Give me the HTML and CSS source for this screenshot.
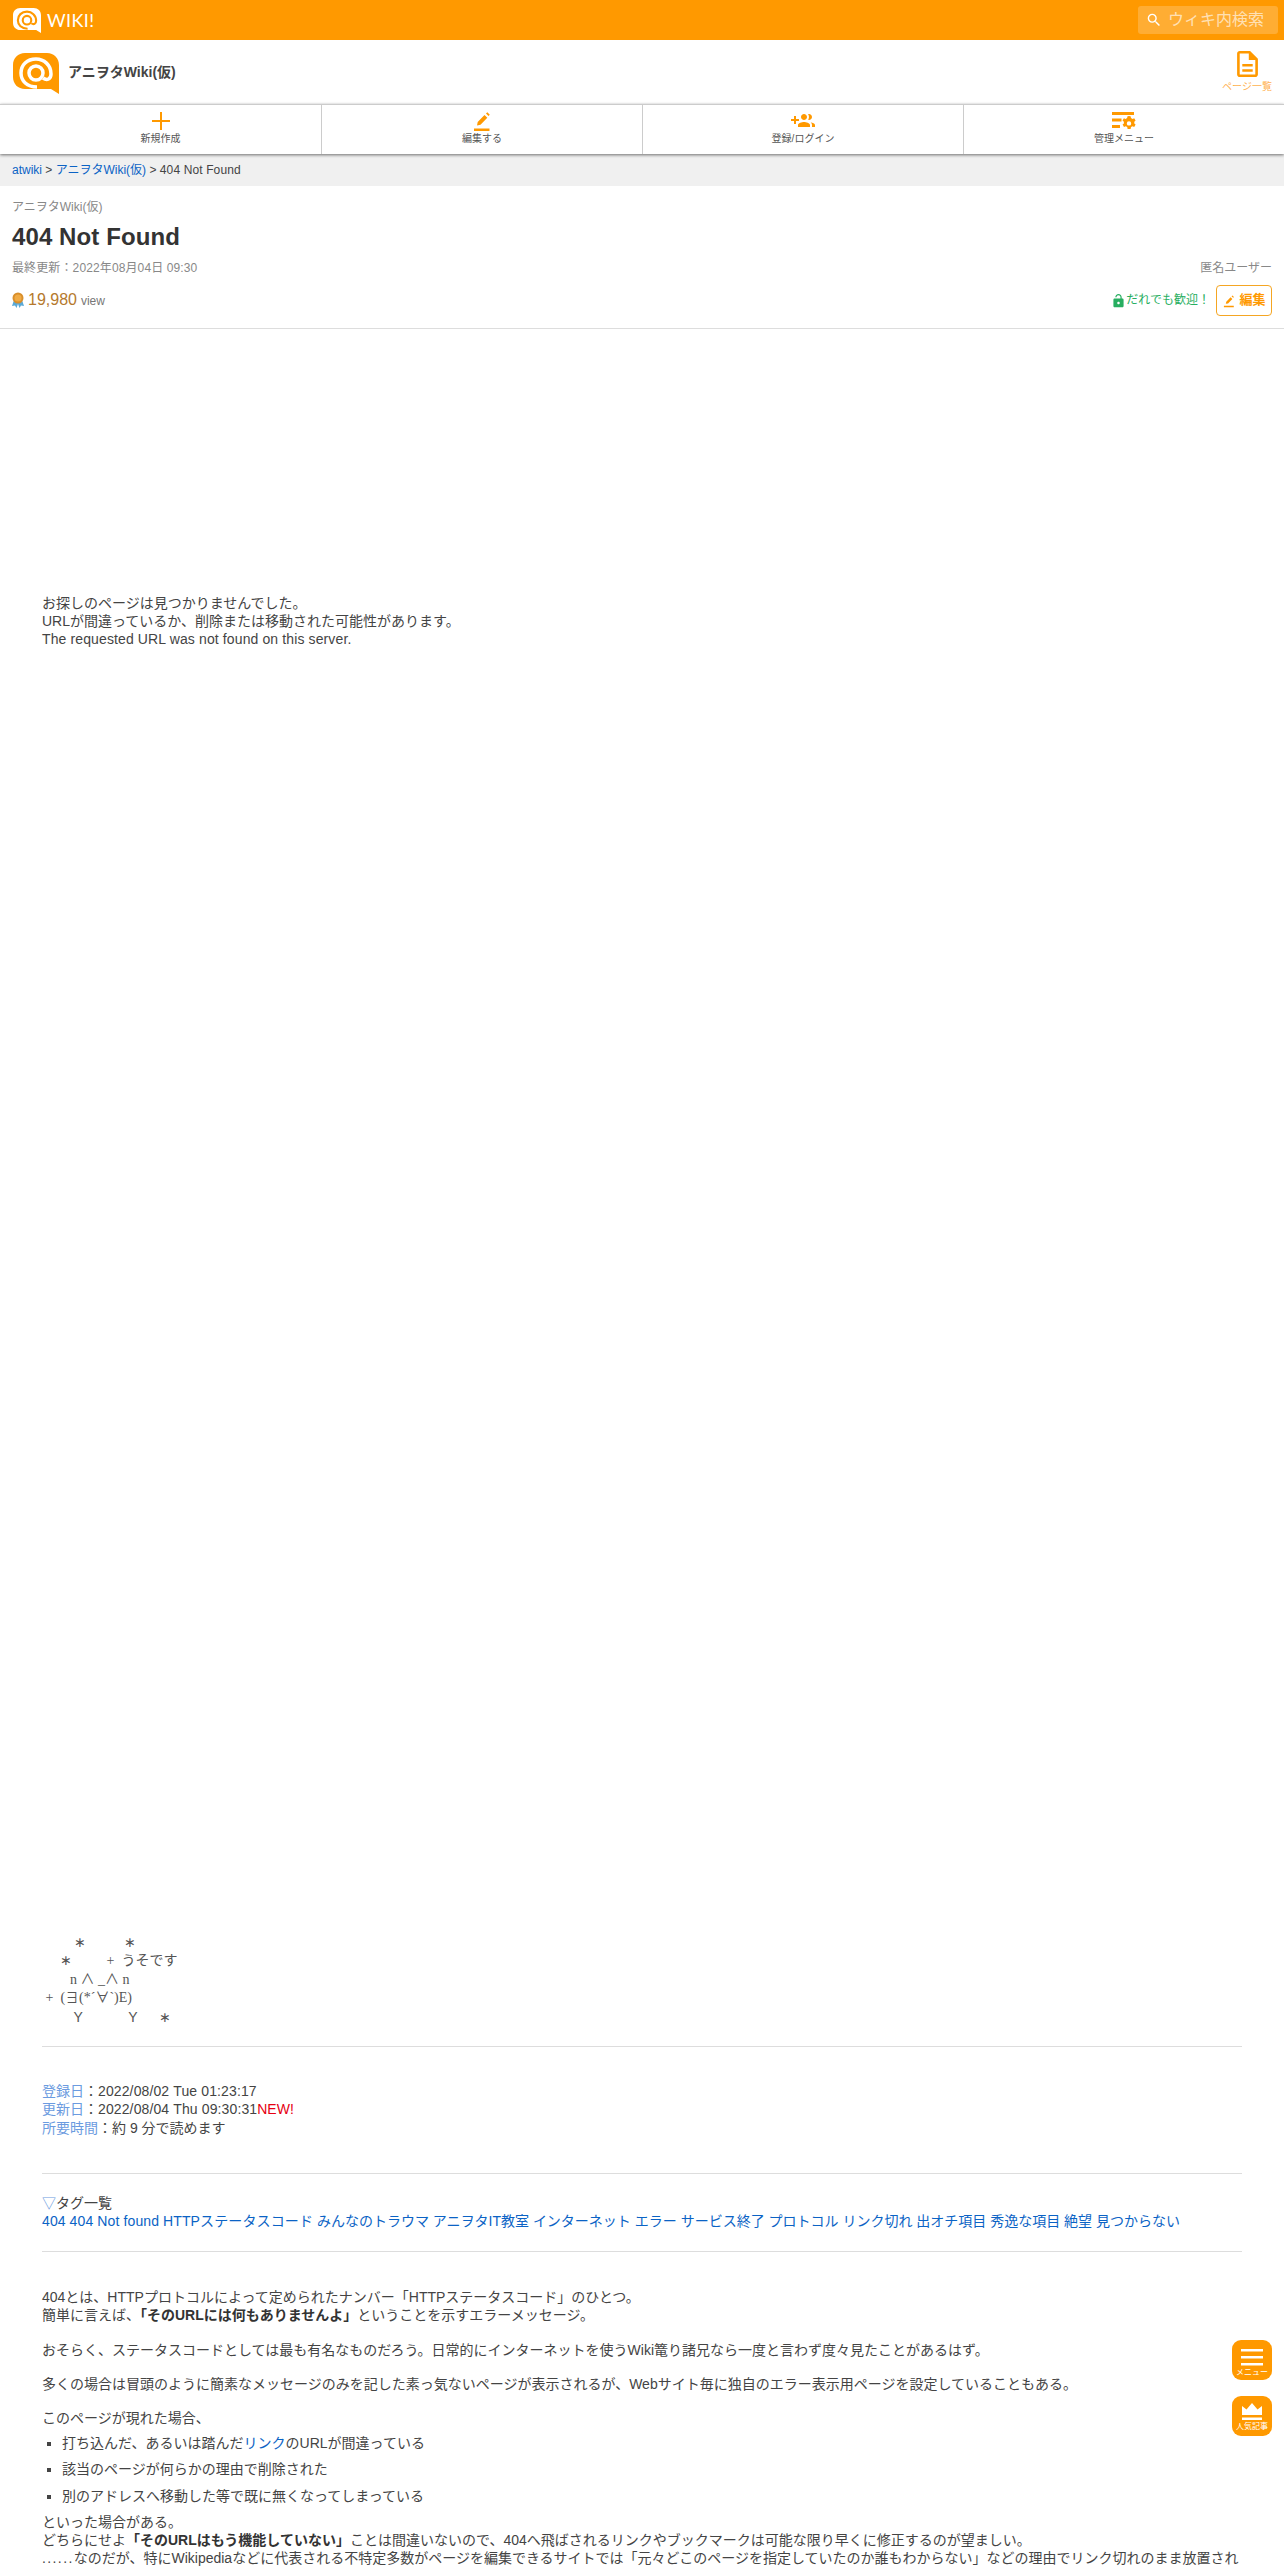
FILE: index.html
```html
<!DOCTYPE html>
<html lang="ja">
<head>
<meta charset="utf-8">
<title>404 Not Found - アニヲタWiki(仮)</title>
<link rel="stylesheet" href="styles.css">
</head>
<body>
<header class="topbar">
  <a class="brand">
    <svg class="brand-mark" viewBox="0 0 46 41"><path class="fill-white" d="M12 0H34C41 0 46 5 46 12V41L38 36H12C5 36 0 31 0 24V12C0 5 5 0 12 0Z"/><circle class="ring-orange" cx="23" cy="20" r="7"/><path class="ring-orange" d="M38 21C38 12 31 6 23 6C14 6 8 12 8 20C8 28 14 34 24 34M38 21C38 26 34 28 30 25"/></svg>
    <span class="brand-word">WIKI!</span>
  </a>
  <div class="search">
    <svg class="search-icon" viewBox="2 2 20 20"><path d="M15.500 14h-.79l-.28-.27A6.470 6.470 0 0 0 16 9.500 6.500 6.500 0 1 0 9.500 16c1.610 0 3.090-.59 4.230-1.570l.27.28v.79l5 4.990L20.490 19l-4.990-5zm-6 0C7.010 14 5 11.990 5 9.500S7.010 5 9.500 5 14 7.010 14 9.500 11.990 14 9.500 14z"/></svg>
    <span class="search-text">ウィキ内検索</span>
  </div>
</header>

<section class="siterow">
  <svg class="site-mark" viewBox="0 0 46 41"><path class="fill-orange" d="M12 0H34C41 0 46 5 46 12V41L38 36H12C5 36 0 31 0 24V12C0 5 5 0 12 0Z"/><circle class="ring-white" cx="23" cy="20" r="7"/><path class="ring-white" d="M38 21C38 12 31 6 23 6C14 6 8 12 8 20C8 28 14 34 24 34M38 21C38 26 34 28 30 25"/></svg>
  <span class="site-name">アニヲタWiki(仮)</span>
  <a class="pagelist">
    <svg class="pagelist-icon" viewBox="4 2 16 20"><path d="M8 16h8v2H8zm0-4h8v2H8zm6-10H6c-1.100 0-2 .9-2 2v16c0 1.100.89 2 1.990 2H18c1.100 0 2-.9 2-2V8l-6-6zm4 18H6V4h7v5h5v11z"/></svg>
    <span>ページ一覧</span>
  </a>
</section>

<nav class="nav">
  <a class="nav-item">
    <svg class="nav-icon" viewBox="0 0 22 22"><path d="M10 2h2v8h8v2h-8v8h-2v-8H2v-2h8z"/></svg>
    <span>新規作成</span>
  </a>
  <a class="nav-item">
    <svg class="nav-icon" viewBox="0 0 22 22"><path d="M13.500 5l2.800 2.800-6.800 7-3.500.7.700-3.500zM15 3.500l1.300-1.300 2.500 2.500-1.300 1.300zM3 18.500h15.500V21H3z"/></svg>
    <span>編集する</span>
  </a>
  <a class="nav-item">
    <svg class="nav-icon" viewBox="0 1 24 22"><path d="M8 10H5V7H3v3H0v2h3v3h2v-3h3v-2zm10 1c1.660 0 2.990-1.340 2.990-3S19.660 5 18 5c-.32 0-.63.05-.91.14.57.81.9 1.790.9 2.860s-.34 2.040-.9 2.860c.28.09.59.14.91.14zm-5 0c1.660 0 2.990-1.340 2.990-3S14.660 5 13 5s-3 1.340-3 3 1.340 3 3 3zm6.620 2.160c.83.73 1.380 1.660 1.380 2.840v2h3v-2c0-1.540-2.370-2.490-4.380-2.840zM13 13c-2 0-6 1-6 3v2h12v-2c0-2-4-3-6-3z"/></svg>
    <span>登録/ログイン</span>
  </a>
  <a class="nav-item">
    <svg class="nav-icon" viewBox="0 0 24 22"><path d="M0 2h22v3H0zM0 8.500h9.500v3H0zM0 15h8v3H0z"/><path transform="translate(1 -1)" d="M16 7l1.600.3.400 1.800 1.500.8 1.700-.6 1.400 2.300-1.300 1.200v1.600l1.300 1.200-1.400 2.300-1.700-.6-1.500.8-.4 1.800h-3l-.4-1.800-1.500-.8-1.700.6-1.400-2.300 1.300-1.200v-1.600L9.500 11.600l1.400-2.300 1.700.6 1.500-.8.4-1.800zm0 5.200a2.200 2.200 0 1 0 0 4.400 2.200 2.200 0 0 0 0-4.400z"/></svg>
    <span>管理メニュー</span>
  </a>
</nav>

<div class="crumbs"><a class="link">atwiki</a> &gt; <a class="link">アニヲタWiki(仮)</a> &gt; <span class="lat">404 Not Found</span></div>

<section class="pagehead">
  <div class="wikiname">アニヲタWiki(仮)</div>
  <h1 class="title">404 Not Found</h1>
  <div class="meta-row">
    <span class="lat">最終更新：2022年08月04日 09:30</span>
    <span>匿名ユーザー</span>
  </div>
  <div class="stat-row">
    <div class="views">
      <svg class="medal" viewBox="0 0 12 16"><path class="medal-ribbon" d="M2 8L0 14l3-.5L4.500 16 6 12 7.500 16 9 13.500l3 .5-2-6z"/><circle class="medal-disc" cx="6" cy="6" r="5.500"/><circle class="medal-core" cx="6" cy="6" r="3.500"/></svg>
      <span class="views-num">19,980</span>
      <span class="views-unit">view</span>
    </div>
    <div class="edit-area">
      <svg class="lock" viewBox="4 1 16 22"><path d="M18 8h-1V6c0-2.760-2.240-5-5-5S7 3.240 7 6h1.900c0-1.710 1.390-3.100 3.100-3.100 1.710 0 3.100 1.390 3.100 3.100v2H6c-1.100 0-2 .9-2 2v10c0 1.100.9 2 2 2h12c1.100 0 2-.9 2-2V10c0-1.100-.9-2-2-2zm-6 9c-1.100 0-2-.9-2-2s.9-2 2-2 2 .9 2 2-.9 2-2 2z"/></svg>
      <span class="welcome">だれでも歓迎！</span>
      <a class="edit-btn">
        <svg class="edit-icon" viewBox="0 0 22 22"><path d="M13.500 5l2.800 2.800-6.800 7-3.500.7.700-3.500zM15 3.500l1.300-1.300 2.500 2.500-1.300 1.300zM3 18.500h15.500V21H3z"/></svg>
        <span>編集</span>
      </a>
    </div>
  </div>
</section>

<main class="content">
  <div class="ad-one"></div>
  <p class="block">お探しのページは見つかりませんでした。<br>URLが間違っているか、削除または移動された可能性があります。<br><span class="lat">The requested URL was not found on this server.</span></p>
  <div class="ad-two"></div>
  <pre class="aa">         ∗           ∗
     ∗          +  うそです
        n ∧ _∧ n
 +  (∃(*´∀`)E)
         <span class="aa-sans">Y</span>             <span class="aa-sans">Y</span>      ∗</pre>
  <hr class="rule rule-a">
  <p class="block">
    <span class="label">登録日</span>：<span class="lat">2022/08/02 Tue 01:23:17</span><br>
    <span class="label">更新日</span>：<span class="lat">2022/08/04 Thu 09:30:31</span><span class="new">NEW!</span><br>
    <span class="label">所要時間</span>：約 9 分で読めます
  </p>
  <hr class="rule rule-b">
  <p class="block"><span class="label-tri">▽</span>タグ一覧<br>
    <a class="link lat">404</a> <a class="link lat">404 Not found</a> <a class="link lat">HTTPステータスコード</a> <a class="link">みんなのトラウマ</a> <a class="link">アニヲタIT教室</a> <a class="link">インターネット</a> <a class="link">エラー</a> <a class="link">サービス終了</a> <a class="link">プロトコル</a> <a class="link">リンク切れ</a> <a class="link">出オチ項目</a> <a class="link">秀逸な項目</a> <a class="link">絶望</a> <a class="link">見つからない</a></p>
  <hr class="rule rule-c">
  <p class="block">404とは、HTTPプロトコルによって定められたナンバー「HTTPステータスコード」のひとつ。<br>簡単に言えば、<strong>「そのURLには何もありませんよ」</strong>ということを示すエラーメッセージ。</p>
  <p class="para">おそらく、ステータスコードとしては最も有名なものだろう。日常的にインターネットを使うWiki篭り諸兄なら一度と言わず度々見たことがあるはず。</p>
  <p class="para">多くの場合は冒頭のように簡素なメッセージのみを記した素っ気ないページが表示されるが、Webサイト毎に独自のエラー表示用ページを設定していることもある。</p>
  <p class="para">このページが現れた場合、</p>
  <ul class="causes">
    <li>打ち込んだ、あるいは踏んだ<a class="link">リンク</a>のURLが間違っている</li>
    <li>該当のページが何らかの理由で削除された</li>
    <li>別のアドレスへ移動した等で既に無くなってしまっている</li>
  </ul>
  <p class="block">といった場合がある。<br>どちらにせよ<strong>「そのURLはもう機能していない」</strong>ことは間違いないので、404へ飛ばされるリンクやブックマークは可能な限り早くに修正するのが望ましい。<br><span class="dots">......</span>なのだが、特にWikipediaなどに代表される不特定多数がページを編集できるサイトでは「元々どこのページを指定していたのか誰もわからない」などの理由でリンク切れのまま放置され</p>
</main>

<a class="float float-menu">
  <svg class="float-icon" viewBox="0 0 22 18"><path d="M0 0h22v2.500H0zM0 7h22v2.500H0zM0 14h22v2.500H0z"/></svg>
  <span>メニュー</span>
</a>
<a class="float float-rank">
  <svg class="float-icon" viewBox="0 0 22 18"><path d="M1 12V3l4.500 3.500L11 0l5.500 6.500L21 3v9z"/><path d="M1 14.500h20V17H1z"/></svg>
  <span>人気記事</span>
</a>
</body>
</html>
```

FILE: styles.css
```css
* { box-sizing: border-box; }
html, body { margin: 0; padding: 0; }
body {
  position: relative;
  height: 2568px;
  overflow: hidden;
  background: #fff;
  color: #444;
  font-family: "Liberation Sans", "Noto Sans CJK JP", sans-serif;
  font-size: 14px;
  line-height: 18.2px;
}
svg { display: block; fill: currentColor; }
.lat { letter-spacing: .12px; }

.topbar {
  height: 40px;
  background: #ff9900;
  display: flex;
  align-items: center;
  justify-content: space-between;
  padding: 0 6px 0 13px;
}
.brand { display: flex; align-items: center; gap: 6px; color: #fff; }
.brand-mark { width: 28px; height: 25px; margin-top: 1px; }
.brand-word { font-family: Lato, sans-serif; font-weight: 400; font-size: 18px; letter-spacing: .4px; line-height: 24px; }
.fill-white { fill: #fff; }
.fill-orange { fill: #ff9900; }
.ring-orange { fill: none; stroke: #ff9900; stroke-width: 3.5; }
.ring-white { fill: none; stroke: #fff; stroke-width: 3.5; }

.search {
  width: 140px;
  height: 28px;
  background: rgba(255, 255, 255, .2);
  border-radius: 3px;
  display: flex;
  align-items: center;
  padding-left: 9px;
  gap: 7px;
}
.search-icon { width: 14px; height: 14px; color: #fff; }
.search-text { font-size: 16px; color: rgba(255, 255, 255, .65); }

.siterow {
  height: 64px;
  display: flex;
  align-items: center;
  padding: 0 12px 0 13px;
}
.site-mark { width: 46px; height: 41px; margin-top: 3px; }
.site-name { margin-left: 9px; font-size: 14px; font-weight: 700; color: #444; }
.pagelist {
  margin-left: auto;
  width: 50px;
  display: flex;
  flex-direction: column;
  align-items: center;
  font-size: 10px;
  line-height: 14px;
  color: #ffb04d;
}
.pagelist-icon { width: 21px; height: 26px; color: #ff9900; margin-bottom: 3px; }

.nav {
  height: 50px;
  display: grid;
  grid-template-columns: repeat(4, 1fr);
  border-top: 1px solid #ccc;
  box-shadow: 0 1px 3px rgba(0, 0, 0, .55);
  position: relative;
}
.nav-item {
  display: flex;
  flex-direction: column;
  align-items: center;
  padding-top: 5px;
  font-size: 10px;
  line-height: 14px;
  color: #555;
  border-left: 1px solid #ccc;
}
.nav-item:first-child { border-left: 0; }
.nav-icon { width: 24px; height: 22px; color: #ff9900; }

.crumbs {
  height: 32px;
  background: #f0f0f0;
  padding: 0 12px;
  font-size: 12px;
  line-height: 32px;
  color: #444;
}
.link { color: #0b63c5; }

.pagehead {
  height: 143px;
  padding: 12px 12px 0;
  border-bottom: 1px solid #ddd;
}
.wikiname { font-size: 12px; line-height: 18px; color: #888; }
.title { margin: 6px 0 0; font-size: 24px; line-height: 30px; font-weight: 700; color: #333; letter-spacing: .1px; }
.meta-row {
  margin-top: 8px;
  display: flex;
  justify-content: space-between;
  font-size: 12px;
  line-height: 16px;
  color: #888;
}
.stat-row { margin-top: 9px; display: flex; justify-content: space-between; align-items: center; }
.views { display: flex; align-items: center; }
.medal { width: 12px; height: 16px; margin-right: 4px; }
.medal-ribbon { fill: #5aa9d6; }
.medal-disc { fill: #d98f2b; }
.medal-core { fill: #f0ab45; }
.views-num { font-size: 16px; color: #b5792d; }
.views-unit { font-size: 12px; color: #777; margin-left: 4px; margin-top: 1px; }
.edit-area { display: flex; align-items: center; }
.lock { width: 11px; height: 14px; color: #27ae60; margin-right: 2px; }
.welcome { font-size: 12px; color: #27ae60; margin-right: 6px; }
.edit-btn {
  width: 56px;
  height: 31px;
  border: 1px solid #f5a623;
  border-radius: 4px;
  display: flex;
  align-items: center;
  justify-content: center;
  gap: 3px;
  font-size: 13px;
  font-weight: 700;
  color: #ff9900;
}
.edit-icon { width: 14px; height: 14px; }

.content { padding: 0 42px; }
.ad-one { height: 265px; }
.ad-two { height: 1285px; }
.block { margin: 0; }
.para { margin: 16px 0 0; }
.aa { margin: 0; font-family: "Liberation Serif", "Noto Sans CJK JP", serif; font-size: 14px; line-height: 18.5px; white-space: pre; color: #555; }
.aa-sans { font-family: "Liberation Sans", sans-serif; }
.rule { margin: 0; border: 0; border-top: 1px solid #ddd; }
.rule-a { margin: 19px 0 35px; }
.rule-b { margin: 36px 0 20px; }
.rule-c { margin: 21px 0 36px; }
.label { color: #6b9be0; }
.label-tri { color: #6b9be0; }
.new { color: #e60012; }
.dots { letter-spacing: 1.400px; }
strong { font-weight: 700; color: #333; }

.causes { margin: 7px 0 0; padding: 0 0 0 20px; list-style: square; }
.causes li { margin-bottom: 8px; }

.float {
  position: absolute;
  left: 1232px;
  width: 40px;
  height: 40px;
  background: #ff9900;
  border-radius: 9px;
  display: flex;
  flex-direction: column;
  align-items: center;
  padding-top: 9px;
  color: #fff;
  font-size: 8px;
  line-height: 10px;
}
.float-menu { top: 2340px; }
.float-rank { top: 2396px; padding-top: 7px; }
.float-icon { width: 22px; height: 18px; margin-bottom: 1px; }
```
